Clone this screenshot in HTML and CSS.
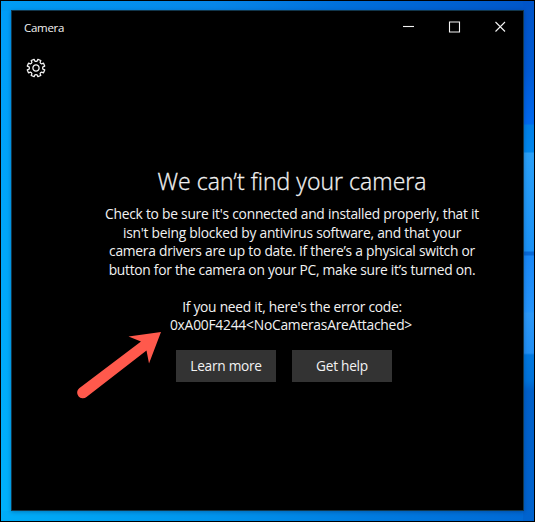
FILE: index.html
```html
<!DOCTYPE html>
<html lang="en">
<head>
<meta charset="utf-8">
<title>Camera</title>
<link rel="stylesheet" href="styles.css">
</head>
<body>
<div class="desktop">
  <main class="window">
    <header class="titlebar">
      <span class="app-name">Camera</span>
      <div class="controls">
        <svg class="control" viewBox="0 0 46 32"><path d="M18 15.500h11"/></svg>
        <svg class="control" viewBox="0 0 46 32"><path d="M18.500 11h10v10H18.500z"/></svg>
        <svg class="control" viewBox="0 0 46 32"><path d="M18.500 11l9.500 9.500M28 11L18.500 20.500"/></svg>
      </div>
    </header>
    <div class="toolbar">
      <svg class="gear" viewBox="-10 -10 20 20">
        <path d="M-1.900-8.700L-1.100-6.900Q0-6.200 1.100-6.900L1.900-8.700L4.800-7.500L4.100-5.600Q4.400-4.400 5.600-4.100L7.500-4.800L8.700-1.900L6.900-1.100Q6.200 0 6.900 1.100L8.700 1.900L7.500 4.800L5.600 4.100Q4.400 4.400 4.100 5.600L4.800 7.500L1.900 8.700L1.100 6.900Q0 6.200-1.100 6.900L-1.900 8.700L-4.800 7.500L-4.100 5.600Q-4.400 4.400-5.600 4.100L-7.500 4.800L-8.700 1.900L-6.900 1.100Q-6.200 0-6.900-1.100L-8.700-1.900L-7.500-4.800L-5.600-4.100Q-4.400-4.400-4.100-5.600L-4.800-7.500Z"/>
        <circle r="3.100"/>
      </svg>
    </div>
    <section class="message">
      <h1>We can’t find your camera</h1>
      <p>
        <span class="line l1">Check to be sure it's connected and installed properly, that it</span>
        <span class="line l2">isn't being blocked by antivirus software, and that your</span>
        <span class="line l3">camera drivers are up to date. If there’s a physical switch or</span>
        <span class="line l4">button for the camera on your PC, make sure it’s turned on.</span>
      </p>
      <p class="error">
        <span class="line l5">If you need it, here's the error code:</span>
        <span class="line l6">0xA00F4244&lt;NoCamerasAreAttached&gt;</span>
      </p>
    </section>
    <div class="actions">
      <button>Learn more</button>
      <button>Get help</button>
    </div>
    <svg class="arrow" viewBox="0 0 90 72"><path d="M2.200 62.200L64 15.500L51.500 10.500L84 6L72 37.500L69.500 24.500L9.500 71A5.200 5.200 0 0 1 2.200 62.200Z"/></svg>
  </main>
</div>
</body>
</html>
```
FILE: styles.css
```css
* { box-sizing: border-box; }
body { margin: 0; }
.desktop {
  width: 535px;
  height: 522px;
  padding: 9px 10px;
  border: 1px solid #000;
  background:
    linear-gradient(#0054c8, #005ad3 70px, #0069ef 123px, #0080e8 124px, #0087ed 151px, #2aa0f8 152px, #1b92f6 250px, #0869d7 251px, #0869d7 254px, #1988f7 255px, #2594fa 311px, #2c98f7 312px, #218ff4 352px, #0078df 354px, #0072d9 380px, #0060c9 390px, #0063ce) right / 11px 100% no-repeat,
    linear-gradient(90deg, #009cf4, #0786e8 40%, #006fdb 65%, #0055c8) top / 100% 10px no-repeat,
    linear-gradient(90deg, #00adf8, #0093ec 40%, #007be0 70%, #0068d4) bottom / 100% 10px no-repeat,
    linear-gradient(#009df8, #00b1fa);
}
.window {
  position: relative;
  display: flex;
  flex-direction: column;
  width: 513px;
  height: 501px;
  border: 1px solid #12364b;
  background: #000;
  color: #f2f2f2;
  font-family: "Open Sans", "Noto Sans", sans-serif;
  box-shadow: 0 1px 4px rgb(0 20 60 / 30%);
}
.titlebar { display: flex; justify-content: space-between; height: 32px; padding-left: 12px; }
.app-name { font-size: 11.5px; line-height: 33px; letter-spacing: -0.3px; }
.controls { display: flex; }
.control { width: 46px; height: 32px; fill: none; stroke: #f2f2f2; stroke-width: 1.1; }
.toolbar { height: 48px; padding: 15px 0 0 14px; }
.gear { display: block; width: 20px; height: 20px; fill: none; stroke: #f2f2f2; stroke-width: 1.3; stroke-linejoin: round; }
.message { width: 400px; margin: 73px 0 0 80px; text-align: center; }
h1 { margin: 0; font-size: 23px; font-weight: 300; line-height: 34px; letter-spacing: 0.05px; white-space: nowrap; -webkit-text-stroke: 0.3px #f2f2f2; }
p { margin: 7px 0 0; font-size: 13.8px; line-height: 18.5px; }
.line { display: block; white-space: nowrap; letter-spacing: -0.24px; }
.l3 { letter-spacing: -0.25px; }
.l4 { letter-spacing: -0.27px; }
.l5 { letter-spacing: -0.26px; }
.l6 { letter-spacing: -0.22px; padding-right: 2px; }
.error { margin-top: 18.5px; }
.actions { display: flex; gap: 16px; margin: 15px 0 0 164px; }
button { width: 100px; height: 32px; padding: 0; border: 0; background: #333; color: #f2f2f2; font: 13.7px "Open Sans", "Noto Sans", sans-serif; letter-spacing: -0.27px; }
.arrow { position: absolute; left: 65px; top: 315px; width: 90px; height: 72px; overflow: visible; fill: #ff594c; }
```
